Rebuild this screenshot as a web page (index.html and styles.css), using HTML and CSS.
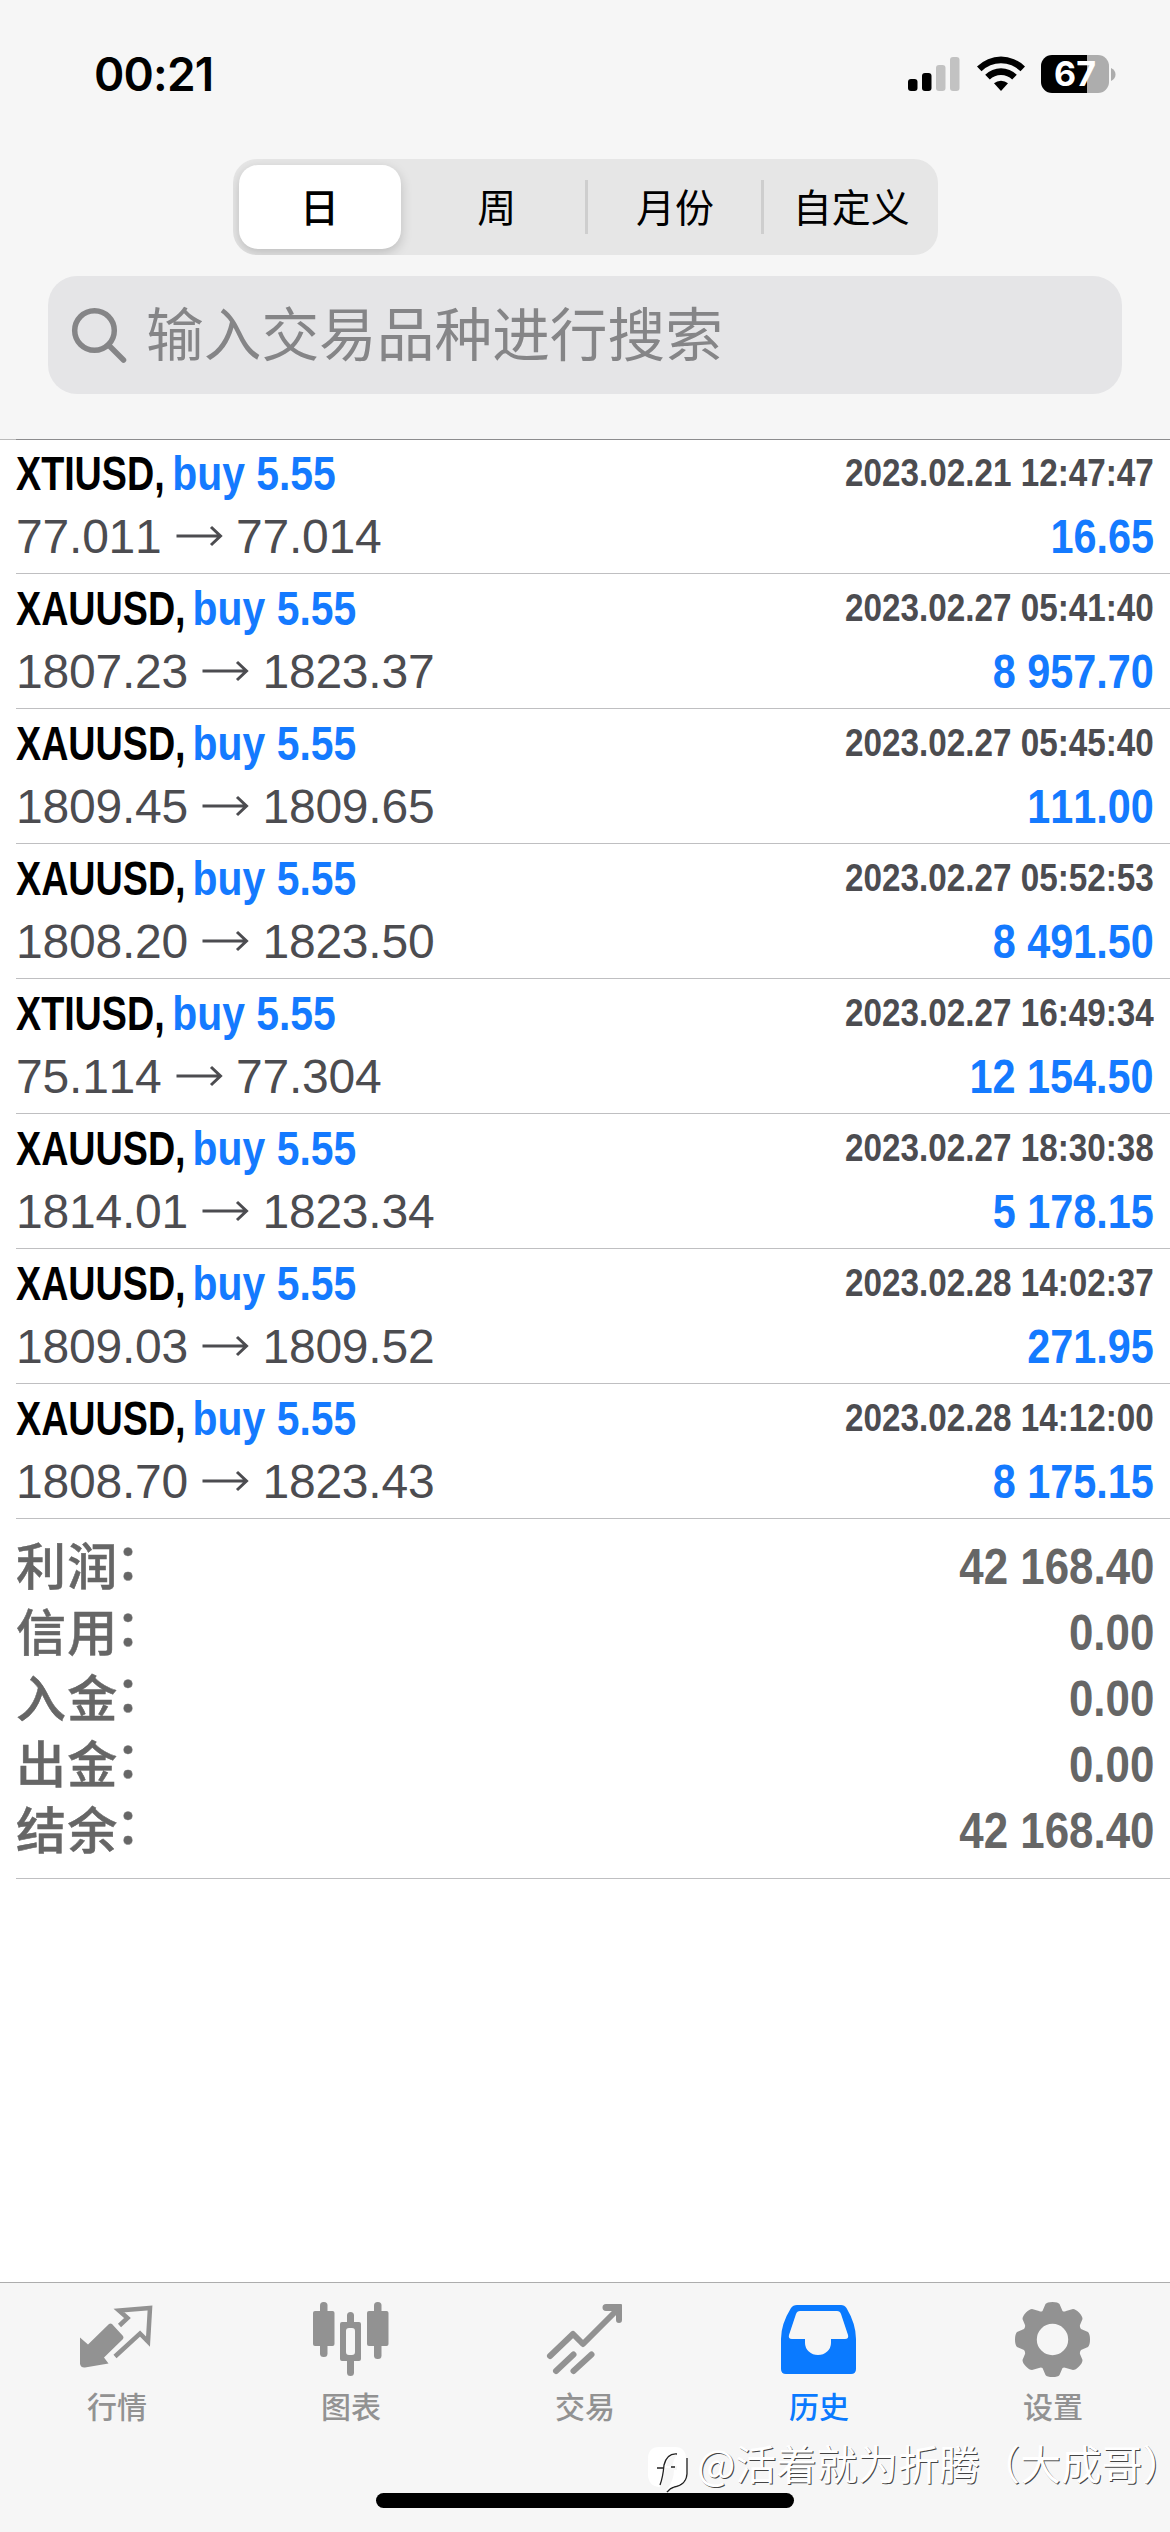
FILE: index.html
```html
<!DOCTYPE html>
<html lang="zh-CN">
<head>
<meta charset="utf-8">
<title>历史</title>
<link rel="stylesheet" href="styles.css">
</head>
<body>
<div class="screen">
  <header class="header">
    <div class="status">
      <span class="clock">00:21</span>
      <div class="status-icons">
        <svg class="signal" width="52" height="36" viewBox="0 0 52 36">
          <rect x="0" y="24" width="9.500" height="12" rx="3"/>
          <rect x="14" y="18" width="9.500" height="18" rx="3"/>
          <rect class="dim" x="28" y="10" width="9.500" height="26" rx="3"/>
          <rect class="dim" x="42" y="2" width="9.500" height="34" rx="3"/>
        </svg>
        <svg class="wifi" width="50" height="37" viewBox="0 0 50 37">
          <path d="M1 11.500A34 34 0 0 1 49 11.500L44.500 16.300A27.500 27.500 0 0 0 5.500 16.300Z"/>
          <path d="M9.200 19.800A22.500 22.500 0 0 1 40.800 19.800L36.200 24.600A16 16 0 0 0 13.800 24.600Z"/>
          <path d="M18 28.300A10.500 10.500 0 0 1 32 28.300L25 36Z"/>
        </svg>
        <div class="battery"><span class="battery-level">67</span></div>
        <svg class="nub" width="5" height="13" viewBox="0 0 5 13"><path d="M0 0C6 2.500 6 10.500 0 13Z"/></svg>
      </div>
    </div>
    <nav class="segments">
      <span class="segment active">日</span>
      <span class="segment">周</span>
      <span class="segment split">月份</span>
      <span class="segment split">自定义</span>
    </nav>
    <div class="search">
      <svg class="lens" width="58" height="58" viewBox="0 0 58 58">
        <circle cx="24.500" cy="24.500" r="19.800"/>
        <path d="M38.500 39L53.500 54"/>
      </svg>
      <span class="placeholder">输入交易品种进行搜索</span>
    </div>
  </header>

  <main class="content">
    <ul class="deals">
      <li class="deal"><span class="name">XTIUSD, <b>buy 5.55</b></span><span class="date">2023.02.21 12:47:47</span><span class="prices">77.011 <svg class="arrow" viewBox="0 0 48 24"><path d="M1.500 12H45M36 3L45.500 12L36 21"/></svg> 77.014</span><span class="profit">16.65</span></li>
      <li class="deal"><span class="name">XAUUSD, <b>buy 5.55</b></span><span class="date">2023.02.27 05:41:40</span><span class="prices">1807.23 <svg class="arrow" viewBox="0 0 48 24"><path d="M1.500 12H45M36 3L45.500 12L36 21"/></svg> 1823.37</span><span class="profit">8 957.70</span></li>
      <li class="deal"><span class="name">XAUUSD, <b>buy 5.55</b></span><span class="date">2023.02.27 05:45:40</span><span class="prices">1809.45 <svg class="arrow" viewBox="0 0 48 24"><path d="M1.500 12H45M36 3L45.500 12L36 21"/></svg> 1809.65</span><span class="profit">111.00</span></li>
      <li class="deal"><span class="name">XAUUSD, <b>buy 5.55</b></span><span class="date">2023.02.27 05:52:53</span><span class="prices">1808.20 <svg class="arrow" viewBox="0 0 48 24"><path d="M1.500 12H45M36 3L45.500 12L36 21"/></svg> 1823.50</span><span class="profit">8 491.50</span></li>
      <li class="deal"><span class="name">XTIUSD, <b>buy 5.55</b></span><span class="date">2023.02.27 16:49:34</span><span class="prices">75.114 <svg class="arrow" viewBox="0 0 48 24"><path d="M1.500 12H45M36 3L45.500 12L36 21"/></svg> 77.304</span><span class="profit">12 154.50</span></li>
      <li class="deal"><span class="name">XAUUSD, <b>buy 5.55</b></span><span class="date">2023.02.27 18:30:38</span><span class="prices">1814.01 <svg class="arrow" viewBox="0 0 48 24"><path d="M1.500 12H45M36 3L45.500 12L36 21"/></svg> 1823.34</span><span class="profit">5 178.15</span></li>
      <li class="deal"><span class="name">XAUUSD, <b>buy 5.55</b></span><span class="date">2023.02.28 14:02:37</span><span class="prices">1809.03 <svg class="arrow" viewBox="0 0 48 24"><path d="M1.500 12H45M36 3L45.500 12L36 21"/></svg> 1809.52</span><span class="profit">271.95</span></li>
      <li class="deal"><span class="name">XAUUSD, <b>buy 5.55</b></span><span class="date">2023.02.28 14:12:00</span><span class="prices">1808.70 <svg class="arrow" viewBox="0 0 48 24"><path d="M1.500 12H45M36 3L45.500 12L36 21"/></svg> 1823.43</span><span class="profit">8 175.15</span></li>
    </ul>
    <dl class="summary">
      <div class="total"><dt>利润<i>：</i></dt><dd>42 168.40</dd></div>
      <div class="total"><dt>信用<i>：</i></dt><dd>0.00</dd></div>
      <div class="total"><dt>入金<i>：</i></dt><dd>0.00</dd></div>
      <div class="total"><dt>出金<i>：</i></dt><dd>0.00</dd></div>
      <div class="total"><dt>结余<i>：</i></dt><dd>42 168.40</dd></div>
    </dl>
  </main>

  <footer class="footer">
    <nav class="tabs">
      <a class="tab">
        <svg class="tab-icon" viewBox="0 0 78 78">
          <path class="fill" d="M2 34.500L10 41.500L31 21Q32.500 20 34 21L45 33Q46 34.500 45 36L26 54.500L30.500 60.500L7 64.500Q3 65 2 61Z"/>
          <path class="line" d="M41.500 22.500L49.500 15L41 7.500L72 5L70 38.500L62 30.500L37 53.500" stroke-width="4.500"/>
        </svg>
        <span>行情</span>
      </a>
      <a class="tab">
        <svg class="tab-icon" viewBox="0 0 78 78">
          <rect class="fill" x="8" y="-1" width="7.500" height="55" rx="3.500"/>
          <rect class="fill" x="1" y="8" width="21.500" height="35" rx="2"/>
          <rect class="fill" x="62" y="-1" width="7.500" height="57" rx="3.500"/>
          <rect class="fill" x="55" y="8" width="21.500" height="35" rx="2"/>
          <path class="fill" fill-rule="evenodd" d="M30 19H35V12.500A3.500 3.500 0 0 1 42 12.500V19H47Q49 19 49 21V56Q49 58 47 58H42V69.500A3.500 3.500 0 0 1 35 69.500V58H30Q28 58 28 56V21Q28 19 30 19ZM37 25Q34 25 34 28V49Q34 52 37 52H40Q43 52 43 49V28Q43 25 40 25Z"/>
        </svg>
        <span>图表</span>
      </a>
      <a class="tab">
        <svg class="tab-icon" viewBox="0 0 78 78">
          <path class="line cap" d="M4 53L27 31L37 41L72 6" stroke-width="6"/>
          <path class="line cap" d="M10 68L27.500 51.500M27.500 68L45.500 51.500" stroke-width="6"/>
          <path class="fill" d="M60 1H75Q76 1 76 2V17A3 3 0 0 1 70 17V12L66 8H60A3.400 3.400 0 0 1 60 1Z"/>
        </svg>
        <span>交易</span>
      </a>
      <a class="tab selected">
        <svg class="tab-icon" viewBox="0 0 78 78">
          <path class="fill" fill-rule="evenodd" d="M17 2H61Q64.500 2 66.500 5Q76 21 76 36V66Q76 71 71 71H6Q1 71 1 66V36Q1 21 11 5Q13 2 17 2ZM20 8Q17 8 16 11L9 32Q8 36 12 36H25V40A13 12 0 0 0 51 40V36H65Q69 36 68 32L61 11Q60 8 57 8Z"/>
        </svg>
        <span>历史</span>
      </a>
      <a class="tab">
        <svg class="tab-icon" viewBox="0 0 78 78">
          <path class="fill" fill-rule="evenodd" d="M38.500 -1Q44 -1 45.500 1L48.500 8Q50 9 52 8L59 6Q61.500 6 65 9.500Q68.500 13 68.500 16L66 22Q65.500 24 67 26L74 29Q76 31 76 36.500Q76 42 74 44L67 47Q65.500 49 66 51L68.500 57Q68.500 60 65 63.500Q61.500 67 59 67L52 65Q50 64 48.500 65L45.500 72Q44 74 38.500 74Q33 74 31.500 72L28.500 65Q27 64 25 65L18 67Q15.500 67 12 63.500Q8.500 60 8.500 57L11 51Q11.500 49 10 47L3 44Q1 42 1 36.500Q1 31 3 29L10 26Q11.500 24 11 22L8.500 16Q8.500 13 12 9.500Q15.500 6 18 6L25 8Q27 9 28.500 8L31.500 1Q33 -1 38.500 -1ZM38.500 20.800A15.700 15.700 0 1 0 38.500 52.200A15.700 15.700 0 1 0 38.500 20.800Z"/>
        </svg>
        <span>设置</span>
      </a>
    </nav>
    <div class="home-indicator"></div>
    <div class="watermark">
      <svg class="mark" width="44" height="48" viewBox="0 0 44 48">
        <path class="mark-shade" d="M40 12V28Q39 39 27 41Q23 42 20 46"/>
        <path class="mark-body" d="M12 1H28Q39 1 39 13V27Q39 38 28 40Q23 41 20 45L18 41H12Q1 40 1 28V13Q1 1 12 1Z"/>
        <path class="mark-gap" d="M30 9Q21 9 19 20H24L23 22H18Q17 33 13 41L20 44Q27 34 27 24H30V20H26Q26 13 30 9Z"/>
        <path class="mark-line" d="M30 8Q20 7 17 19Q16 31 13 39M10 22H17M24 21H28"/>
      </svg>
      <span class="handle">@活着就为折腾（大成哥<span class="close">）</span></span>
    </div>
  </footer>
</div>
</body>
</html>
```
FILE: styles.css
```css
* {
  box-sizing: border-box;
}

body {
  margin: 0;
  background: #fff;
  font-family: "Liberation Sans", "Noto Sans CJK SC", sans-serif;
}

.screen {
  display: flex;
  flex-direction: column;
  width: 1170px;
  height: 2532px;
  overflow: hidden;
}

/* Header */
.header {
  flex: none;
  height: 440px;
  background:
    linear-gradient(90deg, #bbb 16px, #8c8c8e 16px) bottom / 100% 1px no-repeat,
    #f6f6f6;
}

.status {
  display: flex;
  justify-content: space-between;
  height: 159px;
  padding: 55px 54px 0 94px;
}

.clock {
  font: 600 46px/38px Inter, sans-serif;
  letter-spacing: -0.8px;
}

.status-icons {
  display: flex;
  height: 38px;
}

.signal {
  margin-right: 16px;
}

.signal .dim {
  fill: #c2c2c2;
}

.wifi {
  margin-right: 15px;
}

.battery {
  width: 68px;
  height: 38px;
  border-radius: 11px;
  background: linear-gradient(90deg, #000 46px, #adadad 46px);
  text-align: center;
}

.battery-level {
  color: #fff;
  font: 700 34px/38px Inter, sans-serif;
}

.nub {
  margin: 13px 0 0 2px;
  fill: #adadad;
}

.segments {
  display: grid;
  grid-template-columns: repeat(4, 1fr);
  width: 705px;
  height: 96px;
  margin: 0 auto;
  padding: 6px 0;
  border-radius: 24px;
  background: #e6e6e6;
  overflow: hidden;
}

.segment {
  display: flex;
  align-items: center;
  justify-content: center;
  padding-bottom: 5px;
  font: 400 39px/78px "Noto Sans CJK SC", sans-serif;
}

.segment.active {
  margin: 0 8px 0 6px;
  border-radius: 19px;
  background: #fff;
  font-weight: 500;
  box-shadow: 0 4px 12px rgba(0, 0, 0, 0.18);
}

.segment.split {
  padding-left: 4px;
  background: linear-gradient(#cecece, #cecece) left center / 3px 54px no-repeat;
}

.search {
  display: flex;
  align-items: center;
  height: 118px;
  margin: 21px 48px 0;
  padding-left: 22px;
  border-radius: 29px;
  background: #e5e5e7;
}

.lens {
  margin-right: 18px;
  fill: none;
  stroke: #858587;
  stroke-width: 5.5;
  stroke-linecap: round;
}

.placeholder {
  padding-bottom: 7px;
  color: #858587;
  font: 400 57.7px/111px "Noto Sans CJK SC", sans-serif;
}

/* Deals */
.content {
  flex: 1;
}

.deals {
  margin: 0;
  padding: 0 0 0 16px;
  list-style: none;
}

.deal {
  display: grid;
  grid-template-columns: 1fr auto;
  grid-template-rows: 63px 63px;
  height: 135px;
  padding: 3px 16px 0 0;
  border-bottom: 1px solid #bfbfc1;
  line-height: 63px;
  font-size: 48px;
  font-kerning: none;
  white-space: nowrap;
}

.deal:first-child {
  height: 134px;
  padding-top: 2px;
}

.name,
.date,
.profit,
.total dd {
  font-weight: 700;
}

/* Condensed lettering */
.name {
  justify-self: start;
  transform: scaleX(0.785);
  transform-origin: left;
}

.name b {
  display: inline-block;
  margin-left: -4px;
  color: #147aff;
  transform: scaleX(1.085);
  transform-origin: left;
}

.date {
  justify-self: end;
  color: #4c4c50;
  font-size: 38px;
  line-height: 62px;
  transform: scaleX(0.875);
  transform-origin: right;
}

.prices {
  color: #4c4c50;
  letter-spacing: -0.2px;
}

.arrow {
  width: 48px;
  height: 24px;
  margin-bottom: 5px;
  vertical-align: baseline;
  fill: none;
  stroke: #4c4c50;
  stroke-width: 3;
}

.profit {
  justify-self: end;
  color: #147aff;
  transform: scaleX(0.862);
  transform-origin: right;
}

.summary {
  height: 360px;
  margin: 0 0 0 16px;
  padding: 15px 16px 0 0;
  border-bottom: 1px solid #bfbfc1;
}

.total {
  display: flex;
  justify-content: space-between;
  height: 66px;
  color: #666;
  line-height: 66px;
}

.total dt {
  font-family: "Noto Sans CJK SC", sans-serif;
  font-size: 50px;
  font-weight: 500;
  line-height: 59px;
  letter-spacing: 1.2px;
  -webkit-text-stroke: 0.5px #666;
}

.total i {
  display: inline-block;
  font-style: normal;
  transform: translate(-3px, -5px);
}

.total dd {
  margin: 0;
  font-size: 50px;
  font-kerning: none;
  transform: scaleX(0.877);
  transform-origin: right;
}

/* Footer */
.footer {
  position: relative;
  display: flex;
  flex: none;
  flex-direction: column;
  align-items: center;
  height: 250px;
  border-top: 1px solid #adadad;
  background: #f6f6f6;
}

.tabs {
  display: grid;
  grid-template-columns: repeat(5, 1fr);
  width: 100%;
  height: 210px;
  padding-top: 20px;
}

.tab {
  display: flex;
  flex-direction: column;
  align-items: center;
  color: #929292;
  font: 500 30px/44px "Noto Sans CJK SC", sans-serif;
}

.tab.selected {
  color: #0a7aff;
}

.tab-icon {
  width: 78px;
  height: 78px;
  margin-bottom: 2px;
  overflow: visible;
}

.tab-icon .fill {
  fill: currentColor;
}

.tab-icon .line {
  fill: none;
  stroke: currentColor;
}

.tab-icon .cap {
  stroke-linecap: round;
  stroke-linejoin: round;
}

.home-indicator {
  width: 418px;
  height: 15px;
  border-radius: 8px;
  background: #000;
}

.watermark {
  position: absolute;
  top: 163px;
  left: 647px;
  display: flex;
  color: #fff;
  font: 400 40.7px/34px "Noto Sans CJK SC", sans-serif;
  white-space: nowrap;
  text-shadow: 1px 1px 0 #444;
}

.close {
  font-feature-settings: "halt";
}

.mark {
  margin-right: 6px;
  fill: none;
}

.mark-body {
  fill: #fff;
}

.mark-gap {
  fill: #f6f6f6;
}

.mark-shade,
.mark-line {
  stroke: #222;
  stroke-width: 1.3;
}
```
